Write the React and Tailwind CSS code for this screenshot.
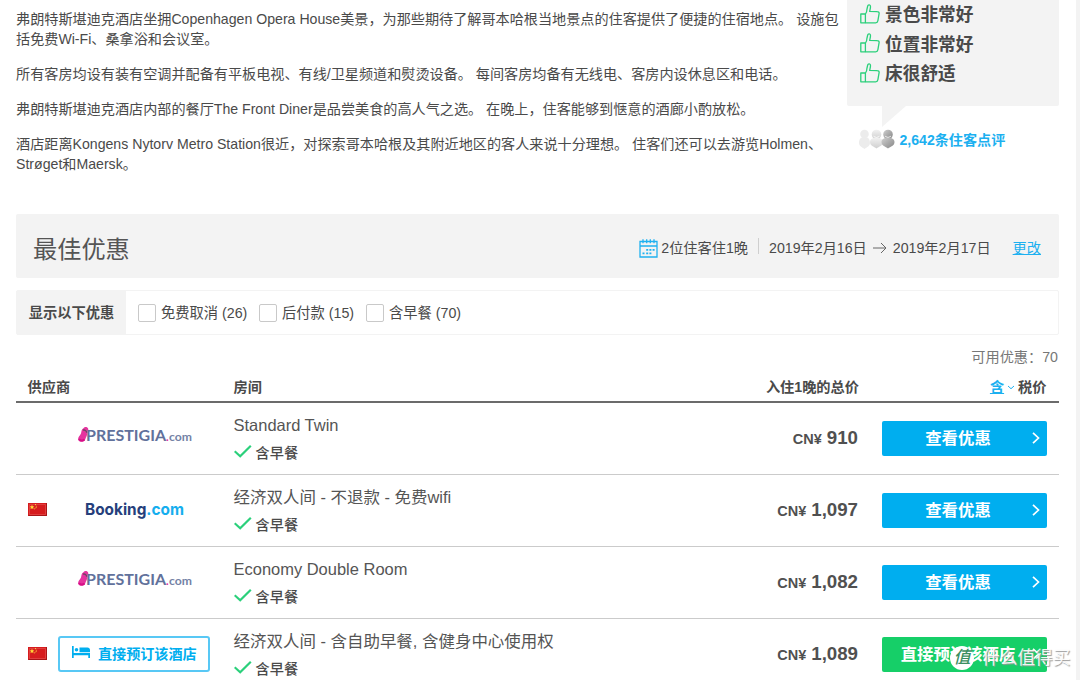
import { clsx } from 'clsx'

const paragraphs = [
  [
    { text: '弗朗特斯堪迪克酒店坐拥Copenhagen Opera House美景，为那些期待了解哥本哈根当地景点的住客提供了便捷的住宿地点。 设施包' },
    { text: '括免费Wi-Fi、桑拿浴和会议室。' },
  ],
  [{ text: '所有客房均设有装有空调并配备有平板电视、有线/卫星频道和熨烫设备。 每间客房均备有无线电、客房内设休息区和电话。' }],
  [{ text: '弗朗特斯堪迪克酒店内部的餐厅The Front Diner是品尝美食的高人气之选。 在晚上，住客能够到惬意的酒廊小酌放松。' }],
  [
    { text: '酒店距离Kongens Nytorv Metro Station很近，对探索哥本哈根及其附近地区的客人来说十分理想。 住客们还可以去游览Holmen、' },
    { text: 'Strøget和Maersk。' },
  ],
]

const highlights = ['景色非常好', '位置非常好', '床很舒适']

const filters = [
  { label: '免费取消 (26)', width: 'w-[121px]' },
  { label: '后付款 (15)', width: 'w-[107px]' },
  { label: '含早餐 (70)', width: 'w-[120px]' },
]

const deals = [
  { supplier: 'prestigia', room: 'Standard Twin', price: '910' },
  { supplier: 'booking', flag: true, room: '经济双人间 - 不退款 - 免费wifi', price: '1,097' },
  { supplier: 'prestigia', room: 'Economy Double Room', price: '1,082' },
  { supplier: 'direct', flag: true, room: '经济双人间 - 含自助早餐, 含健身中心使用权', price: '1,089', direct: true },
]

function ThumbIcon() {
  return (
    <svg width="20" height="20" viewBox="0 0 20 20" className="-mt-[2px]" fill="none" stroke="#2bd07b" strokeWidth="1.3" strokeLinejoin="round">
      <path d="M.8 10h4.600v8.800H.8z" />
      <path d="M5.400 10C6.600 8.800 6.900 7 6.900 5.500L7.700 2c.4-1.800 2.800-1.500 2.800.4 0 1.800-.6 3.400-.8 5l7.600.3c1.400 0 2 .9 1.800 2l-1.200 7c-.2 1.400-1 2.100-2.200 2.100H5.400" />
    </svg>
  )
}

function PeopleIcon() {
  return (
    <svg width="38" height="20" viewBox="0 0 38 20" className="-mt-[2px]">
      <defs>
        <linearGradient id="mid" x1="0" y1="0" x2="0" y2="1">
          <stop offset="0" stopColor="#f2f2f2" />
          <stop offset="1" stopColor="#cfcfcf" />
        </linearGradient>
        <linearGradient id="dark" x1="0" y1="0" x2="1" y2="1">
          <stop offset="0" stopColor="#d0d0d0" />
          <stop offset="1" stopColor="#858585" />
        </linearGradient>
      </defs>
      <g fill="#ececec">
        <circle cx="6.500" cy="5" r="4.300" />
        <path d="M1 14c0-4 2-6 5.500-6s5.500 2 5.500 6c0 3-3 4-5.500 6C4 18 1 17 1 14z" />
      </g>
      <g fill="url(#mid)">
        <circle cx="18.500" cy="5.500" r="4.800" />
        <path d="M12 13c0-3 3-4.500 6.500-4.500S25 10 25 13c0 4-4 4.500-6.500 6.500C16 17.500 12 17 12 13z" />
      </g>
      <g fill="url(#dark)">
        <circle cx="30" cy="5.500" r="4.800" />
        <path d="M23.500 13c0-3 3-4.500 6.500-4.500s6.500 1.500 6.500 4.500c0 4-4 4.500-6.500 6.500-2.500-2-6.500-2.500-6.500-6.500z" />
      </g>
      <path d="M15.500 7.200q3 2.500 6 0M27 7.200q3 2.500 6 0" fill="none" stroke="#fff" strokeOpacity=".7" />
    </svg>
  )
}

function CalendarIcon() {
  return (
    <svg width="19" height="19" viewBox="0 0 19 19" fill="none" stroke="#1fb1f0" strokeWidth="1.300">
      <path d="M1 2.500h17v15.500H1zM1 7h17M4 .3v4M7.700.3v4M11.300.3v4M15 .3v4" />
      <path d="M7.200 10.800h2M10.400 10.800h2M13.600 10.800h2M3.500 14.300h2M7.200 14.300h2M10.400 14.300h2" strokeWidth="1.800" />
    </svg>
  )
}

function Flag() {
  return (
    <svg width="19" height="13" viewBox="0 0 19 13">
      <rect width="19" height="13" fill="#d61c1e" />
      <path d="M1.500 1.500h16v10h-16z" fill="none" stroke="#e9605c" strokeOpacity=".5" />
      <path d="M19 0v13H0l1-1h17V0z" fill="#a81517" />
      <path d="M4 1.800l.7 1.500 1.600.1-1.200 1.100.4 1.700L4 5.300l-1.500.9.400-1.700-1.200-1.100 1.600-.1z" fill="#ffd83a" />
      <path d="M7 1.200l1 .7M7.800 3l.8.3M7.600 4.800l.9-.2M6.300 6l.9-.5" stroke="#ffd83a" />
    </svg>
  )
}

function PrestigiaLogo() {
  return (
    <svg width="116" height="20" viewBox="0 0 116 20">
      <path d="M0 13.500C0 11 2 9.500 3 7.500 3.500 5.500 3.500 3.500 5.200 2.600c.8-2 4.300-2.200 5 .2.600 1.800-.6 2.600-.9 4.200 0 2.500-1.300 4-1.900 6C6.800 15.800 1.500 17.500 0 13.500z" fill="#e5349f" />
      <path d="M1 13.200c1.500 1.800 4 1.800 5.500.3" stroke="#d60f86" strokeWidth="2" fill="none" />
      <path d="M5 4.200c1.800-.6 3.600.6 3.700 2.600" stroke="#6d4560" strokeWidth="1.400" fill="none" />
      <text x="8" y="15" textLength="80" lengthAdjust="spacingAndGlyphs" fontFamily="Lato, sans-serif" fontWeight="700" fontSize="16" fill="#61719b">PRESTIGIA</text>
      <text x="88" y="15" fontFamily="Lato, sans-serif" fontWeight="700" fontSize="11" fill="#e5249a">.</text>
      <text x="91" y="15" textLength="23" lengthAdjust="spacingAndGlyphs" fontFamily="Lato, sans-serif" fontSize="11.500" fontWeight="700" fill="#7482a6">com</text>
    </svg>
  )
}

function BookingLogo() {
  return (
    <svg width="104" height="28" viewBox="0 0 104 28">
      <text x="1" y="19.500" textLength="99" lengthAdjust="spacingAndGlyphs" fontFamily="Inter, sans-serif" fontWeight="700" fontSize="16.500" fill="#263f7b">
        Booking<tspan fill="#16aeee">.com</tspan>
      </text>
    </svg>
  )
}

function DirectBadge() {
  return (
    <div className="mt-[2px] flex h-[36px] w-[152px] items-center rounded-[3px] border-2 border-[#58c8f5] pl-[12px] text-[#00aeef]">
      <svg width="18" height="12" viewBox="0 0 18 12" className="-mt-[4px]" fill="#00aeef">
        <path d="M0 0h1.700v7H18v5h-1.700V9.300H1.700V12H0z" />
        <circle cx="4.500" cy="3.800" r="1.800" />
        <path d="M7.500 1.500h8C17 1.500 18 2.500 18 4v2.300H7.500z" />
      </svg>
      <span className="ml-[8px] whitespace-nowrap text-[14.100px] font-bold leading-5">直接预订该酒店</span>
    </div>
  )
}

function DealRow({ deal, last }) {
  return (
    <div className={clsx('flex h-[72px] shrink-0', !last && 'border-b border-[#cbcbcb]')}>
      <div className="flex h-[69px] w-[42px] shrink-0 items-center pl-3">{deal.flag && <Flag />}</div>
      <div className="flex h-[69px] w-[175.500px] shrink-0 items-center">
        {deal.supplier === 'prestigia' && <div className="mb-[2px] ml-[20px]"><PrestigiaLogo /></div>}
        {deal.supplier === 'booking' && <div className="mb-px ml-[26px]"><BookingLogo /></div>}
        {deal.supplier === 'direct' && <DirectBadge />}
      </div>
      <div className="w-[474px] shrink-0 pt-[10px]">
        <div className="whitespace-nowrap text-[16.480px] leading-6 text-[#555]">{deal.room}</div>
        <div className="mt-[5px] flex items-center">
          <svg width="18" height="13" viewBox="0 0 18 13" className="-mt-[3px]" fill="none" stroke="#2bd07b" strokeWidth="2.200">
            <path d="M.7 6.200l5.500 5L16.800.8" />
          </svg>
          <span className="ml-[4px] text-[14.200px] font-medium leading-[22px] text-[#4a4a4a]">含早餐</span>
        </div>
      </div>
      <div className="flex h-[72px] w-[150.500px] shrink-0 items-center justify-end whitespace-nowrap font-bold text-[#505050]">
        <span className="mr-[5px] mt-[3px] text-[14.500px] font-semibold">CN¥</span>
        <span className="text-[18.700px]">{deal.price}</span>
      </div>
      <button
        className={clsx(
          'ml-[24px] mt-[18px] flex h-[35.500px] w-[165px] items-center rounded-[2px] text-white',
          deal.direct ? 'bg-[#16cf68]' : 'bg-[#00aeef]',
        )}
      >
        <span className="mt-px w-[152px] text-center text-[16.400px] font-bold">{deal.direct ? '直接预订该酒店' : '查看优惠'}</span>
        <svg width="8" height="12" viewBox="0 0 8 12" className="-ml-[2px]" fill="none" stroke="#fff" strokeWidth="1.700">
          <path d="M1 .8L6.500 6 1 11.200" />
        </svg>
      </button>
    </div>
  )
}

export default function App() {
  return (
    <div className="relative flex h-[680px] w-[1080px] overflow-hidden bg-white font-['Liberation_Sans','Noto_Sans_CJK_SC',sans-serif] text-[#4a4a4a]">
      <main className="ml-4 flex h-full w-[1043px] shrink-0 flex-col">
        {/* Description and guest ratings */}
        <section className="flex h-[214px] shrink-0 justify-between">
          <div className="flex flex-col gap-[15.700px] pt-[10px] text-[14.130px] leading-[19.600px]">
            {paragraphs.map((lines, i) => (
              <div key={i}>
                {lines.map((line) => (
                  <div key={line.text} className="whitespace-nowrap">{line.text}</div>
                ))}
              </div>
            ))}
          </div>
          <aside className="-ml-10 w-[212px] shrink-0">
            <div className="flex h-[106px] flex-col rounded-b-[2px] bg-[#f3f3f3] pl-[13px]">
              {highlights.map((text) => (
                <div key={text} className="flex h-[29.500px] items-center">
                  <ThumbIcon />
                  <span className="ml-[5px] mt-px text-[17.700px] font-bold leading-7">{text}</span>
                </div>
              ))}
            </div>
            <svg width="24" height="21" viewBox="0 0 24 21" className="ml-[35px] block">
              <path d="M0 0h24L0 21z" fill="#f3f3f3" />
            </svg>
            <div className="mt-[2px] flex items-center pl-[11px]">
              <PeopleIcon />
              <span className="ml-[3.500px] mt-px whitespace-nowrap text-[14.100px] font-bold leading-5 text-[#1cb0f0]">2,642条住客点评</span>
            </div>
          </aside>
        </section>

        {/* Stay details */}
        <section className="flex h-[64px] shrink-0 items-center rounded-[2px] bg-[#f3f3f3] pl-[17px] pr-[18px]">
          <h2 className="mt-[8px] text-[24.200px] font-normal text-[#555]">最佳优惠</h2>
          <div className="ml-auto mt-[5px] flex items-center whitespace-nowrap text-[14.200px]">
            <CalendarIcon />
            <span className="ml-[3px]">2位住客住1晚</span>
            <span className="mb-[4px] ml-[10px] mr-[10px] h-4 w-px bg-[#cfcfcf]" />
            <span>2019年2月16日</span>
            <svg width="14" height="12" viewBox="0 0 14 12" className="mx-[6px]" fill="none" stroke="#666" strokeWidth="1">
              <path d="M0 6h13M8 1l5 5-5 5" />
            </svg>
            <span>2019年2月17日</span>
            <a className="ml-[22px] text-[#1cb0f0] underline">更改</a>
          </div>
        </section>

        {/* Filters */}
        <section className="mt-3 flex h-[45px] shrink-0 items-center rounded-[2px] border border-[#f3f3f3] text-[14.250px]">
          <div className="flex h-full w-[109px] items-center justify-center bg-[#f3f3f3] pt-[2px] font-bold">显示以下优惠</div>
          <div className="ml-[11.500px] mt-px flex">
            {filters.map((f) => (
              <label key={f.label} className={clsx('flex items-center whitespace-nowrap', f.width)}>
                <span className="mr-[5.500px] h-[18px] w-[18px] rounded-[2px] border border-[#c9c9c9] bg-white" />
                <span className="mt-px">{f.label}</span>
              </label>
            ))}
          </div>
        </section>

        <div className="mt-[11px] h-[22px] shrink-0 pr-px text-right text-[14.200px] leading-[22px] text-[#777]">可用优惠：70</div>

        {/* Deals */}
        <div className="flex h-[34.500px] shrink-0 items-center border-b-2 border-[#6b6b6b] pt-[7px] text-[14.200px] font-bold">
          <span className="w-[206px] pl-[11.500px]">供应商</span>
          <span className="ml-[11.500px]">房间</span>
          <span className="ml-auto mr-[131px]">入住1晚的总价</span>
          <span className="flex items-center pr-[12.500px]">
            <a className="text-[#1cb0f0] underline">含</a>
            <svg width="8" height="5" viewBox="0 0 8 5" className="mx-[3px]" fill="none" stroke="#1cb0f0">
              <path d="M1 1l3 2.700L7 1" />
            </svg>
            税价
          </span>
        </div>
        {deals.map((deal, i) => (
          <DealRow key={i} deal={deal} last={i === deals.length - 1} />
        ))}
      </main>
      <div className="ml-auto w-[4px] bg-[#f3f3f3]" />

      {/* Site stamp over the page corner */}
      <div className="absolute left-[950px] top-[645px] flex items-center">
        <span className="flex h-[24px] w-[24px] items-center justify-center rounded-full bg-white text-[17px] font-medium italic leading-none text-[#3c8f62]">值</span>
        <span className="ml-[8px] mt-px whitespace-nowrap text-[17.700px] leading-6 text-white/90 [text-shadow:1px_1px_1px_#999]">什么值得买</span>
      </div>
    </div>
  )
}
